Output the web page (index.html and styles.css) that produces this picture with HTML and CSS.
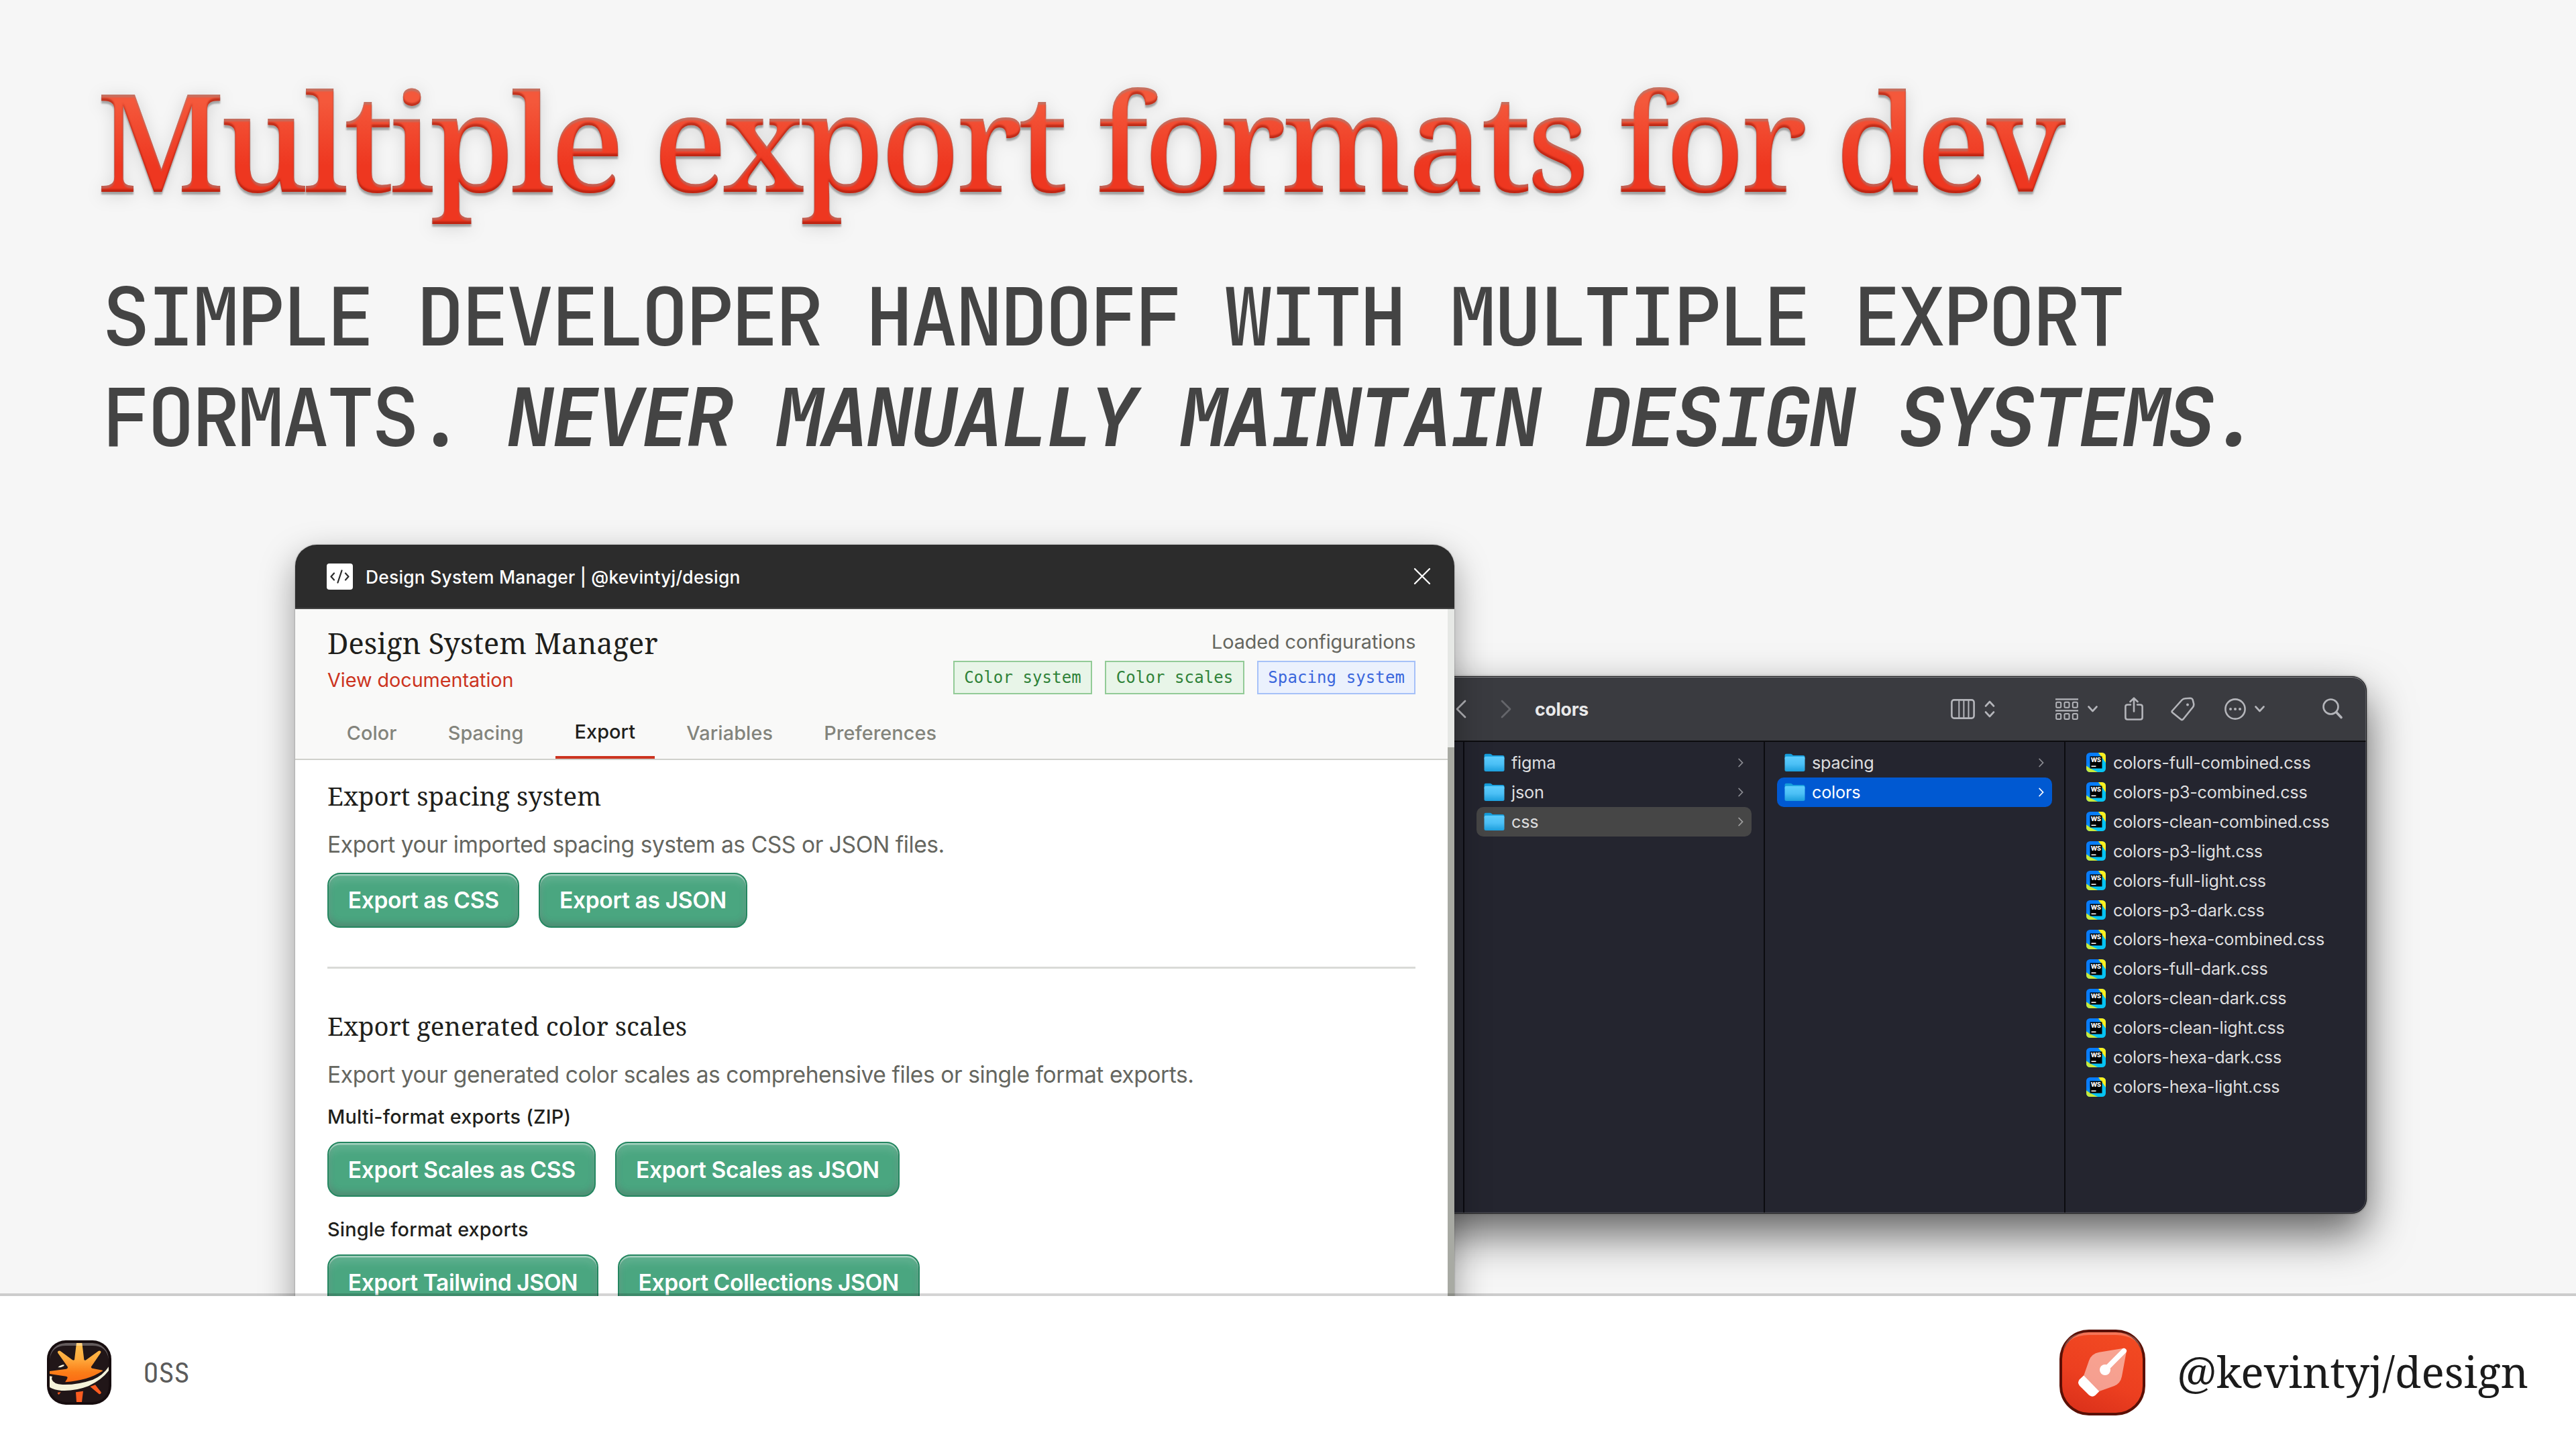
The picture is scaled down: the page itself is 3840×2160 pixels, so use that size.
FILE: index.html
```html
<!DOCTYPE html>
<html lang="en">
<head>
<meta charset="utf-8">
<title>Multiple export formats for dev</title>
<link rel="stylesheet" href="styles.css">
</head>
<body>
<svg class="defs" width="0" height="0" aria-hidden="true">
  <defs>
    <filter id="emboss" x="-2%" y="-20%" width="104%" height="140%" color-interpolation-filters="sRGB">
      <feGaussianBlur in="SourceAlpha" stdDeviation="1" result="soft"/>
      <feOffset in="soft" dy="-4" result="up"/>
      <feComposite in="SourceAlpha" in2="up" operator="out" result="low"/>
      <feFlood flood-color="#a01808" flood-opacity=".6"/>
      <feComposite in2="low" operator="in" result="lowEdge"/>
      <feOffset in="soft" dy="4" result="down"/>
      <feComposite in="SourceAlpha" in2="down" operator="out" result="high"/>
      <feFlood flood-color="#8c9090" flood-opacity=".45"/>
      <feComposite in2="high" operator="in" result="highEdge"/>
      <feMerge><feMergeNode in="SourceGraphic"/><feMergeNode in="lowEdge"/><feMergeNode in="highEdge"/></feMerge>
    </filter>
    <linearGradient id="folderFill" x1="0" y1="0" x2="0" y2="1"><stop offset="0" stop-color="#5ecdfd"/><stop offset=".5" stop-color="#4cc0f6"/><stop offset="1" stop-color="#1c9fdd"/></linearGradient>
    <linearGradient id="wsFill" x1="0" y1="0" x2="1" y2="1"><stop offset=".3" stop-color="#087cfa"/><stop offset=".65" stop-color="#07c3f2"/></linearGradient>
    <linearGradient id="starFill" x1="0" y1="0" x2="0" y2="1"><stop offset="0" stop-color="#ffc04f"/><stop offset=".4" stop-color="#ffab3d"/><stop offset=".75" stop-color="#fb7d18"/><stop offset="1" stop-color="#fb6a14"/></linearGradient>
    <symbol id="folder" viewBox="0 0 31 28"><path d="M.5 6V3Q.5.8 2.700.8H9q1.500 0 2.500 1L13 3H28q2.500 0 2.500 2.500V9H.5z" fill="#149ddc"/><path d="M.5 7Q.5 4.800 2.700 4.800H28.300Q30.500 4.800 30.500 7V24.500Q30.500 27 28 27H3Q.5 27 .5 24.500z" fill="url(#folderFill)"/></symbol>
    <symbol id="ws" viewBox="0 0 29 29"><clipPath id="wsClip"><rect width="29" height="29" rx="5.500"/></clipPath><g clip-path="url(#wsClip)"><rect width="29" height="29" fill="url(#wsFill)"/><path d="M18 0H29V15L24 8z" fill="#fcf01f"/><path d="M0 19.500 5 23 17 29H0z" fill="#c6ea3c"/></g><rect x="5.500" y="5.500" width="18" height="18" fill="#000"/><text x="6.800" y="14" font-size="9" font-weight="800" font-family="Inter, sans-serif" fill="#fff" textLength="15">WS</text><rect x="7.500" y="19.500" width="7" height="1.600" fill="#fff"/></symbol>
    <symbol id="chev" viewBox="0 0 8 14"><path d="M1.200 1.500 6.500 7 1.200 12.500" fill="none" stroke="currentColor" stroke-width="1.800" stroke-linecap="round"/></symbol>
    <symbol id="drop" viewBox="0 0 15 10"><path d="M1.500 1.500 7.500 8 13.500 1.500" fill="none" stroke="currentColor" stroke-width="2.600" stroke-linecap="round" stroke-linejoin="round"/></symbol>
  </defs>
</svg>

<main class="slide">
  <header class="intro">
    <h1 class="title">Multiple export formats for dev</h1>
    <p class="lead">SIMPLE DEVELOPER HANDOFF WITH MULTIPLE EXPORT<br>FORMATS. <em>NEVER MANUALLY MAINTAIN DESIGN SYSTEMS.</em></p>
  </header>

  <section class="desktop">
    <article class="finder">
      <header class="toolbar">
        <svg class="nav back" width="16" height="28" viewBox="0 0 16 28"><path d="M14 2 2 14 14 26"/></svg>
        <svg class="nav fwd" width="16" height="28" viewBox="0 0 16 28"><path d="M2 2 14 14 2 26"/></svg>
        <strong class="folder-name">colors</strong>
        <div class="tools">
          <svg class="ic t-cols" width="36" height="30" viewBox="0 0 36 30"><rect x="1.400" y="1.400" width="33.200" height="27.200" rx="3.500"/><path d="M12.300 1.500V28.500M19.400 1.500V28.500M26.500 1.500V28.500" stroke-width="2"/></svg>
          <svg class="ic t-updown" width="16" height="26" viewBox="0 0 16 26"><path d="M2 8.500 8 2 14 8.500M2 17.500 8 24 14 17.500"/></svg>
          <svg class="ic t-group" width="34" height="34" viewBox="0 0 34 34"><path d="M0 2.400H34M0 19.400H34" stroke-width="2.200"/><g stroke-width="2"><rect x="1.200" y="6.800" width="7" height="8" rx="1.500"/><rect x="13.500" y="6.800" width="7" height="8" rx="1.500"/><rect x="25.800" y="6.800" width="7" height="8" rx="1.500"/><rect x="1.200" y="24" width="7" height="8" rx="1.500"/><rect x="13.500" y="24" width="7" height="8" rx="1.500"/><rect x="25.800" y="24" width="7" height="8" rx="1.500"/></g></svg>
          <svg class="ic t-drop" width="15" height="10"><use href="#drop"/></svg>
          <svg class="ic t-share" width="28" height="35" viewBox="0 0 28 35"><path d="M9 11.500H4.500Q1.400 11.500 1.400 14.500V30.500Q1.400 33.500 4.500 33.500H23.500Q26.600 33.500 26.600 30.500V14.500Q26.600 11.500 23.500 11.500H19M14 21.500V2M8.500 7 14 1.700 19.500 7"/></svg>
          <svg class="ic t-tag" width="36" height="36" viewBox="0 0 36 36"><path d="M2.200 20.500 16.500 4.500Q18.500 2.300 21.500 2.200L29 1.800Q31.500 1.800 32.600 4L34 9.500Q34.800 12.500 33 15L18.500 33Q16.500 35 14.500 33L2.200 23Q1 21.800 2.200 20.500z"/><circle cx="25" cy="11.500" r="2" fill="currentColor" stroke="none"/></svg>
          <svg class="ic t-more" width="32" height="32" viewBox="0 0 32 32"><circle cx="16" cy="16" r="14.600"/><g fill="currentColor" stroke="none"><circle cx="9" cy="16" r="2"/><circle cx="16" cy="16" r="2"/><circle cx="23" cy="16" r="2"/></g></svg>
          <svg class="ic t-drop" width="15" height="10"><use href="#drop"/></svg>
          <svg class="ic t-search" width="30" height="31" viewBox="0 0 30 31"><circle cx="12.500" cy="12.500" r="11"/><path d="M20.500 20.500 28 28.500" stroke-width="3.600"/></svg>
        </div>
      </header>
      <div class="columns">
        <div class="col sliver"></div>
        <ul class="col">
          <li class="row"><svg class="fold" width="31" height="28"><use href="#folder"/></svg>figma<svg class="go" width="8" height="14"><use href="#chev"/></svg></li>
          <li class="row"><svg class="fold" width="31" height="28"><use href="#folder"/></svg>json<svg class="go" width="8" height="14"><use href="#chev"/></svg></li>
          <li class="row open"><svg class="fold" width="31" height="28"><use href="#folder"/></svg>css<svg class="go" width="8" height="14"><use href="#chev"/></svg></li>
        </ul>
        <ul class="col">
          <li class="row"><svg class="fold" width="31" height="28"><use href="#folder"/></svg>spacing<svg class="go" width="8" height="14"><use href="#chev"/></svg></li>
          <li class="row active"><svg class="fold" width="31" height="28"><use href="#folder"/></svg>colors<svg class="go" width="8" height="14"><use href="#chev"/></svg></li>
        </ul>
        <ul class="col files">
          <li class="row"><svg class="ws" width="29" height="29"><use href="#ws"/></svg>colors-full-combined.css</li>
          <li class="row"><svg class="ws" width="29" height="29"><use href="#ws"/></svg>colors-p3-combined.css</li>
          <li class="row"><svg class="ws" width="29" height="29"><use href="#ws"/></svg>colors-clean-combined.css</li>
          <li class="row"><svg class="ws" width="29" height="29"><use href="#ws"/></svg>colors-p3-light.css</li>
          <li class="row"><svg class="ws" width="29" height="29"><use href="#ws"/></svg>colors-full-light.css</li>
          <li class="row"><svg class="ws" width="29" height="29"><use href="#ws"/></svg>colors-p3-dark.css</li>
          <li class="row"><svg class="ws" width="29" height="29"><use href="#ws"/></svg>colors-hexa-combined.css</li>
          <li class="row"><svg class="ws" width="29" height="29"><use href="#ws"/></svg>colors-full-dark.css</li>
          <li class="row"><svg class="ws" width="29" height="29"><use href="#ws"/></svg>colors-clean-dark.css</li>
          <li class="row"><svg class="ws" width="29" height="29"><use href="#ws"/></svg>colors-clean-light.css</li>
          <li class="row"><svg class="ws" width="29" height="29"><use href="#ws"/></svg>colors-hexa-dark.css</li>
          <li class="row"><svg class="ws" width="29" height="29"><use href="#ws"/></svg>colors-hexa-light.css</li>
        </ul>
      </div>
    </article>

    <article class="plugin">
      <header class="plugin-bar">
        <svg class="plugin-icon" width="39" height="39" viewBox="0 0 39 39"><rect width="39" height="39" rx="4" fill="#fff"/><path d="M11 14.500 6.500 19.500 11 24.500M28 14.500 32.500 19.500 28 24.500M22.500 10.500 16.500 28.500" fill="none" stroke="#2c2c2c" stroke-width="2.200" stroke-linecap="round" stroke-linejoin="round"/></svg>
        <span class="plugin-name">Design System Manager | @kevintyj/design</span>
        <svg class="close" width="26" height="26" viewBox="0 0 26 26"><path d="M2 2 24 24M24 2 2 24" stroke="#fff" stroke-width="2.300" stroke-linecap="round"/></svg>
      </header>
      <div class="plugin-view">
        <div class="plugin-page">
          <div class="head">
            <div class="head-row">
              <div>
                <h2 class="app-title">Design System Manager</h2>
                <a class="docs">View documentation</a>
              </div>
              <div class="loaded">
                <span class="loaded-label">Loaded configurations</span>
                <div class="badges"><span class="badge">Color system</span><span class="badge">Color scales</span><span class="badge blue">Spacing system</span></div>
              </div>
            </div>
            <nav class="tabs"><a class="tab">Color</a><a class="tab">Spacing</a><a class="tab current">Export</a><a class="tab">Variables</a><a class="tab">Preferences</a></nav>
          </div>
          <div class="content">
            <h3 class="heading">Export spacing system</h3>
            <p class="text">Export your imported spacing system as CSS or JSON files.</p>
            <div class="buttons first"><button class="btn">Export as CSS</button><button class="btn">Export as JSON</button></div>
            <hr class="rule">
            <h3 class="heading">Export generated color scales</h3>
            <p class="text">Export your generated color scales as comprehensive files or single format exports.</p>
            <h4 class="sub">Multi-format exports (ZIP)</h4>
            <div class="buttons"><button class="btn">Export Scales as CSS</button><button class="btn">Export Scales as JSON</button></div>
            <h4 class="sub second">Single format exports</h4>
            <div class="buttons tight"><button class="btn">Export Tailwind JSON</button><button class="btn">Export Collections JSON</button></div>
          </div>
        </div>
        <div class="scroll"><div class="thumb"></div></div>
      </div>
    </article>
  </section>

  <footer class="footer">
    <div class="oss">
      <svg class="oss-logo" width="96" height="96" viewBox="30 30 288 288">
        <clipPath id="ossClip"><rect x="42" y="42" width="264" height="264" rx="72"/></clipPath>
        <rect x="30" y="30" width="288" height="288" rx="84" fill="#170d0f"/>
        <rect x="42" y="42" width="264" height="264" rx="72" fill="#211618"/>
        <g clip-path="url(#ossClip)">
          <path fill="url(#starFill)" d="M162 42H187L196 116Q199 122 205 118L260 78Q266 75 270 79 273 83 269 88L228 148Q226 153 232 155L278 164Q281 167 276 169C235 195 180 212 112 217Q112 213 118 206L122 197Q122 193 116 191L42 180V168L117 158Q124 155 123 149L79 87Q76 80 81 78 86 75 91 79L143 117Q150 122 153 116z"/>
          <path fill="#f5f3da" d="M42 190 54 192Q50 198 52 205 58 226 100 228 165 230 235 206 280 188 306 148V166Q275 207 215 235 155 258 95 255 62 252 42 240zM79 151Q90 140 107 139L106 145 92 151z"/>
          <path fill="#fb5c20" d="M159 262 192 257 186 306H162zM223 237 246 229 272 262Q274 268 268 270 264 272 260 268zM78 263 92 262 84 272Q77 272 78 263z"/>
          <path fill="#fff" fill-opacity=".3" d="M42 114Q42 42 114 42H234Q306 42 306 114 296 54 234 54H114Q52 54 42 114z"/>
        </g>
      </svg>
      <span class="oss-label">OSS</span>
    </div>
    <div class="brand">
      <svg class="brand-logo" width="128" height="128" viewBox="57 48 384 384">
        <linearGradient id="brandFill" x1=".7" y1="0" x2=".3" y2="1"><stop offset="0" stop-color="#f24a22"/><stop offset=".6" stop-color="#ec3f20"/><stop offset="1" stop-color="#dc321b"/></linearGradient>
        <rect x="57" y="48" width="384" height="384" rx="132" fill="#5a1005"/>
        <rect x="69" y="60" width="360" height="360" rx="120" fill="url(#brandFill)"/>
        <path fill="#fff" fill-opacity=".24" d="M72 150Q84 60 189 60H309Q414 60 426 150 404 72 309 72H189Q94 72 72 150z"/>
        <path fill="#fff" fill-opacity=".5" d="M345 131 235 149Q200 155 189 187L166 253 235 324 302 300Q330 288 336 257L357 143z"/>
        <path fill="none" stroke="#fff" stroke-width="23" stroke-linecap="round" d="M345.500 143.500 262 227"/>
        <circle cx="261" cy="228" r="24" fill="#fff"/>
        <path fill="#fff" d="M166 253 147 271Q135 284 147 299L188 340Q203 354 218 341L235 324z"/>
      </svg>
      <span class="brand-name">@kevintyj/design</span>
    </div>
  </footer>
</main>
</body>
</html>
```
FILE: styles.css
```css
* { box-sizing: border-box; }
body { margin: 0; background: #f6f6f6; font-family: Inter, "Liberation Sans", sans-serif; }
h1, h2, h3, h4, p, ul { margin: 0; padding: 0; font-weight: 400; }
ul { list-style: none; }
svg { display: block; flex: none; }
.defs { position: absolute; }

.slide { width: 3840px; height: 2160px; display: flex; flex-direction: column; overflow: hidden; position: relative; }

.intro { padding: 107px 144px 0; height: 720px; white-space: nowrap; }
.title {
  font: 500 203px/200px "Noto Serif", "DejaVu Serif Condensed", serif;
  letter-spacing: -6.300px;
  word-spacing: 2px;
  padding: 20px 12px 40px 0;
  margin: -20px 0 0;
  width: max-content;
  color: transparent;
  background: linear-gradient(#f4583b 20px, #f4583b 65px, #ee3720 160px);
  -webkit-background-clip: text;
  background-clip: text;
  filter: url(#emboss) drop-shadow(0 4px 1px rgba(0,0,0,.3)) drop-shadow(0 4px 12px rgba(0,0,0,.14));
}
.lead {
  margin: 50px 0 0 8px;
  font: 500 120px/150px "JetBrains Mono", "DejaVu Sans Mono", monospace;
  letter-spacing: -5.080px;
  color: #444;
}
.lead em { font-weight: 750; }

/* windows on the desktop */
.desktop { position: relative; height: 1212px; overflow: visible; }

.finder {
  position: absolute; left: 2100px; top: 288px; width: 1428px; height: 801px;
  border-radius: 22px; border: 1px solid #17171a; background: #24252f; overflow: hidden;
  display: flex; flex-direction: column;
  box-shadow: 0 30px 66px rgba(0,0,0,.62), 0 0 3px rgba(0,0,0,.5);
  font-weight: 500; font-size: 25.2px; letter-spacing: -.2px; color: #dededf;
}
.finder::after { content: ""; position: absolute; inset: 0; border: 1.500px solid rgba(255,255,255,.2); border-top-color: rgba(255,255,255,.4); border-radius: 21px; }
.toolbar { height: 97px; flex: none; background: #3a3b40; border-bottom: 2px solid #0c0c0f; display: flex; align-items: center; padding: 0 35px 0 69px; }
.nav { fill: none; stroke-width: 2.800; stroke-linecap: round; stroke-linejoin: round; }
.back { stroke: #b5b5b9; }
.fwd { stroke: #65666b; margin: 0 35px 0 51px; }
.folder-name { font-weight: 700; font-size: 26.6px; color: #e9e9ea; }
.tools { margin-left: auto; display: flex; align-items: center; }
.ic { color: #b4b5ba; fill: none; stroke: currentColor; stroke-width: 2.600; stroke-linecap: round; stroke-linejoin: round; }
.t-updown { margin-left: 14px; }
.t-group { margin: 0 14px 0 90px; stroke-linecap: butt; }
.t-share { margin-left: 40px; }
.t-tag { margin: 0 44px 0 41px; }
.t-more { margin-right: 13px; }
.t-search { margin-left: 86px; }

.columns { flex: 1; display: grid; grid-template-columns: 82px 448px 448px 1fr; }
.col { border-right: 2.500px solid #0b0b0f; padding: 9px 18px 0; }
.files { border: 0; padding-left: 31px; }
.row { height: 43.930px; display: flex; align-items: center; padding: 0 12px 0 11px; border-radius: 10px; }
.files .row { padding: 0; }
.fold { margin-right: 10px; }
.ws { margin-right: 11px; }
.go { margin-left: auto; color: #8b8c92; }
.open { background: #464646; }
.open .go { color: #a0a0a0; }
.active { background: #0059d2; color: #fff; }
.active .go { color: #fff; }

.plugin {
  position: absolute; left: 440px; top: 92px; width: 1728px; height: 1200px;
  border-radius: 32px 32px 0 0;
  background: #fff;
  box-shadow: 0 20px 52px rgba(0,0,0,.38), 0 0 2px rgba(0,0,0,.4);
}
.plugin-bar { height: 96px; background: #2c2c2c; border-bottom: 2.400px solid #444; border-radius: 32px 32px 0 0; display: flex; align-items: center; padding: 0 35px 0 47px; }
.plugin-name { margin: 2px 0 0 19px; font-weight: 500; font-size: 26.400px; letter-spacing: .22px; color: #fff; }
.close { margin-left: auto; }
.plugin-view { display: flex; height: 1104px; }
.plugin-page { flex: 1; }
.scroll { width: 9.600px; background: #e6e8e5; padding-top: 206px; }
.thumb { height: 898px; background: #a8aaa3; }

.head { background: #f9f9f8; border-bottom: 2.400px solid #d0d1cc; padding: 25.400px 48px 0; height: 225.400px; color: #65665f; }
.head-row { display: flex; justify-content: space-between; height: 101.600px; }
.app-title { font: 400 43.200px/52px "Noto Serif", "DejaVu Serif Condensed", serif; letter-spacing: .1px; color: #1f1f1c; }
.docs { display: block; margin-top: 11.800px; font-size: 28.800px; line-height: 34.600px; letter-spacing: -.06px; color: #cc3420; }
.loaded { padding-top: 6.800px; text-align: right; }
.loaded-label { display: block; font-size: 28.800px; line-height: 34.600px; letter-spacing: -.08px; }
.badges { display: flex; gap: 19.200px; margin-top: 10.400px; }
.badge { height: 50px; display: flex; align-items: center; padding: 0 14.400px; border: 2.400px solid #93cb97; background: #e8f5e8; color: #2f8238; font: 24px "DejaVu Sans Mono", monospace; letter-spacing: .1px; }
.badge.blue { border-color: #a6c1f8; background: #ebf1fd; color: #3a66dc; }
.tabs { display: flex; gap: 18.500px; margin-top: 19px; }
.tab { height: 77px; padding: 0 28.800px; display: flex; align-items: center; font-weight: 500; font-size: 28.800px; letter-spacing: .1px; color: #83847c; }
.tab.current { color: #1f1f1c; border-bottom: 4.800px solid #cc3420; }

.content { padding: 29px 48px 0; }
.heading { font: 400 38.400px/48px "Noto Serif", "DejaVu Serif Condensed", serif; letter-spacing: -.04px; color: #1f1f1c; }
.text { margin-top: 23.600px; font-size: 33.600px; line-height: 50px; letter-spacing: -.44px; color: #65665f; }
.buttons { display: flex; gap: 28.800px; margin-top: 19.500px; }
.buttons.first { margin-top: 17px; }
.btn {
  height: 82px; padding: 1px 28.800px 0; border: 2.400px solid #248660; border-radius: 19px; background: #4aa680;
  font: 600 33.600px/40px Inter, sans-serif; letter-spacing: -.37px; color: #fff;
  box-shadow: inset 0 2.400px 1px rgba(255,255,255,.45), inset 0 10px 12px rgba(255,255,255,.12), inset 0 -5px 10px rgba(90,90,90,.35);
}
.tight .btn { letter-spacing: -.44px; }
.rule { height: 2.400px; border: 0; background: #d9dad7; margin: 58.500px 0 61.500px; }
.sub { margin-top: 19.800px; font-weight: 500; font-size: 28.800px; line-height: 36px; letter-spacing: .2px; color: #1f1f1c; }
.sub.second { margin-top: 30.500px; }

.footer {
  position: relative; height: 232px; margin-top: -4px; flex: none;
  border-top: 4px solid rgba(0,0,0,.17); background: #fff; background-clip: padding-box;
  display: flex; justify-content: space-between; align-items: center; padding: 0 71px 0 70px;
}
.oss, .brand { display: flex; align-items: center; }
.oss-label { margin: 2px 0 0 47px; font: 400 40px/50px "JetBrains Mono", monospace; letter-spacing: -1px; color: #5b5b5b; }
.brand-name { margin: -3px 0 0 47px; font: 400 64px/80px "Noto Serif", "DejaVu Serif Condensed", serif; letter-spacing: .06px; color: #1b1b1b; }
```
